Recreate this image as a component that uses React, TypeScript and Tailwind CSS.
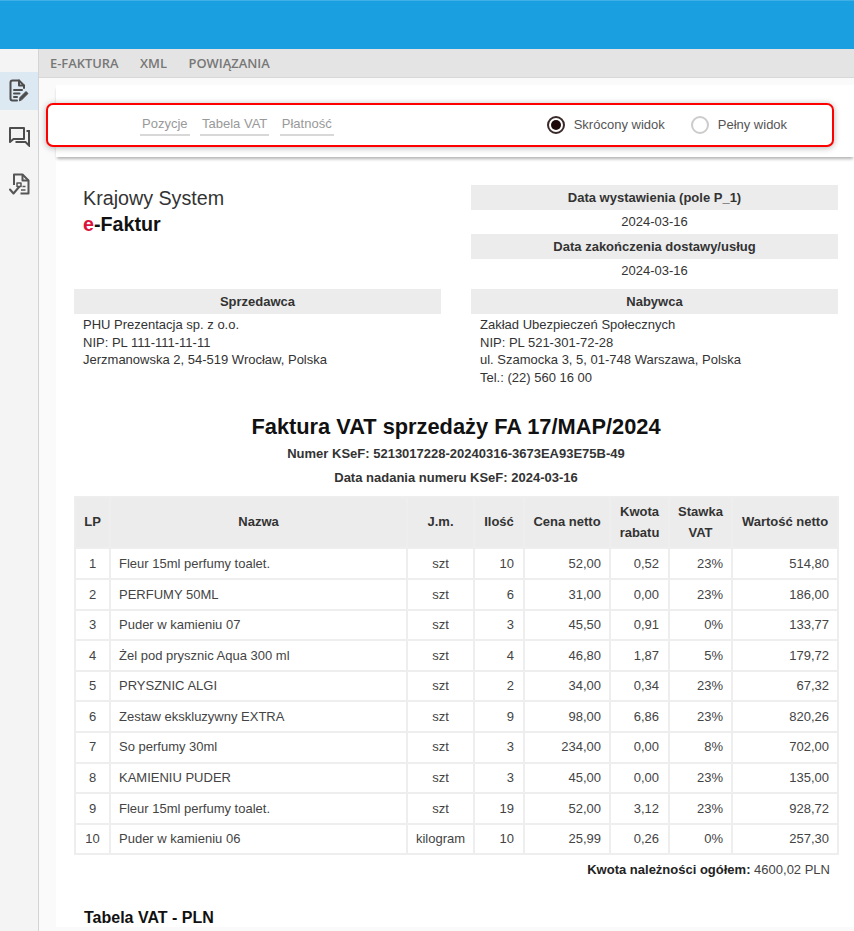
import type { ReactNode } from "react";

const rows = [
  ["1", "Fleur 15ml perfumy toalet.", "szt", "10", "52,00", "0,52", "23%", "514,80"],
  ["2", "PERFUMY 50ML", "szt", "6", "31,00", "0,00", "23%", "186,00"],
  ["3", "Puder w kamieniu 07", "szt", "3", "45,50", "0,91", "0%", "133,77"],
  ["4", "Żel pod prysznic Aqua 300 ml", "szt", "4", "46,80", "1,87", "5%", "179,72"],
  ["5", "PRYSZNIC ALGI", "szt", "2", "34,00", "0,34", "23%", "67,32"],
  ["6", "Zestaw ekskluzywny EXTRA", "szt", "9", "98,00", "6,86", "23%", "820,26"],
  ["7", "So perfumy 30ml", "szt", "3", "234,00", "0,00", "8%", "702,00"],
  ["8", "KAMIENIU PUDER", "szt", "3", "45,00", "0,00", "23%", "135,00"],
  ["9", "Fleur 15ml perfumy toalet.", "szt", "19", "52,00", "3,12", "23%", "928,72"],
  ["10", "Puder w kamieniu 06", "kilogram", "10", "25,99", "0,26", "0%", "257,30"],
];

function GrayBar({ children }: { children: ReactNode }) {
  return <div className="flex h-[25px] items-center justify-center bg-[#ececec] text-[13px] font-bold text-[#333]">{children}</div>;
}

function Th({ children }: { children: ReactNode }) {
  return <th className="border-2 border-[#eeeeee] bg-[#ececec] px-2 pb-[2px] text-center text-[13px] leading-[21px] font-bold text-[#333]">{children}</th>;
}

function SectionTab({ label }: { label: string }) {
  return <span className="border-b-2 border-[#d8d8d8] px-[2px] pb-[2px] text-[13px] leading-[17px] text-[#999]">{label}</span>;
}

function InvoiceEditIcon() {
  return (
    <svg width="20" height="24" viewBox="0 0 20 24" fill="none" stroke="#4d4d4d" strokeWidth="2" strokeLinejoin="round" strokeLinecap="round">
      <path d="M8 21.5H3.5Q1.5 21.5 1.5 19.5V3.5Q1.5 1.5 3.5 1.5H10L15 6.5V9" />
      <path d="M10 1.5V6.5H15" />
      <path d="M5 11H13M5 14.5H10.5M5 18H8" />
      <path d="M10.5 21.5L11 18.5L17 12.5L19 14.5L13 20.5Z" fill="#4d4d4d" strokeWidth="1" />
    </svg>
  );
}

function ChatIcon() {
  return (
    <svg width="21" height="20" viewBox="0 0 21 20" fill="none" stroke="#4d4d4d" strokeWidth="2">
      <path d="M1 1H15V12H4.5L1 15Z" strokeLinejoin="round" />
      <path d="M17.5 4H20V18.5L16.5 15H6.5" />
    </svg>
  );
}

function CheckDocIcon() {
  return (
    <svg width="21" height="23" viewBox="0 0 21 23" fill="none" stroke="#555555" strokeWidth="2" strokeLinejoin="round">
      <path d="M5 12V1.5H13.5L19.5 7.5V20.5H11.5" />
      <path d="M13.5 1.5V7.5H19.5" />
      <path d="M8 10H12V13.5H8ZM13.5 13.5H16.5M12 17H16.5" strokeWidth="1.5" />
      <path d="M1 16.5L4.5 20.5L10 14" strokeLinecap="round" />
    </svg>
  );
}

export default function App() {
  return (
    <div className="flex h-[931px] w-[854px] flex-col overflow-hidden bg-[#fafafa] font-['Liberation_Sans',Arial,sans-serif] text-[#333]">
      <div className="h-[49px] shrink-0 border-t border-[#3fb0e6] bg-[#1a9fe0]" />
      <div className="flex min-h-0 flex-1">
        <aside className="flex w-[39px] shrink-0 flex-col border-r border-[#d4d4d4] bg-[#f4f4f4] pt-[23px]">
          <div className="flex h-[38px] items-center justify-center bg-[#dce9f2]">
            <InvoiceEditIcon />
          </div>
          <div className="flex h-[46px] items-center justify-center pt-[8px]">
            <ChatIcon />
          </div>
          <div className="flex h-[46px] items-center justify-center pt-[10px]">
            <CheckDocIcon />
          </div>
        </aside>
        <div className="flex min-w-0 flex-1 flex-col">
          <nav className="flex h-[29px] shrink-0 items-center gap-[21.5px] border-b border-[#d8d8d8] bg-[#e4e4e4] pt-[2px] pl-[11px] font-['Open_Sans',sans-serif] text-[12.9px] font-semibold text-[#777]">
            <span>E-FAKTURA</span>
            <span>XML</span>
            <span>POWIĄZANIA</span>
          </nav>
          <main className="mt-[7px] ml-[17px] h-[842px] bg-white">
            <div className="relative h-[72px] bg-white shadow-[0_3px_3px_-1px_rgba(0,0,0,0.3)]">
              <div className="absolute top-[18px] left-[-10px] flex h-[44px] w-[788px] items-center rounded-[7px] border-2 border-[#f00] bg-white pl-[92px] shadow-[0_1px_6px_rgba(0,0,0,0.3)]">
                <div className="flex gap-[10.5px]">
                  <SectionTab label="Pozycje" />
                  <SectionTab label="Tabela VAT" />
                  <SectionTab label="Płatność" />
                </div>
                <label className="ml-[213px] flex items-center gap-[9px] text-[13px] text-[#555]">
                  <span className="flex h-[18px] w-[18px] items-center justify-center rounded-full border-2 border-[#3a2a2a]">
                    <span className="h-[10px] w-[10px] rounded-full bg-[#1f0a0a]" />
                  </span>
                  Skrócony widok
                </label>
                <label className="ml-[26px] flex items-center gap-[9px] text-[13px] text-[#555]">
                  <span className="h-[18px] w-[18px] rounded-full border-2 border-[#ccc]" />
                  Pełny widok
                </label>
              </div>
            </div>

            <div className="w-[782px] pl-[18px]">
              <div className="grid grid-cols-[367px_367px] gap-x-[30px] pt-[28px]">
                <div className="pl-[9px]">
                  <p className="text-[19.7px] leading-[26px] text-[#333]">Krajowy System</p>
                  <p className="text-[19.7px] leading-[26px] font-bold text-[#111]">
                    <span className="text-[#dc143c]">e</span>-Faktur
                  </p>
                </div>
                <div>
                  <GrayBar>Data wystawienia (pole P_1)</GrayBar>
                  <p className="h-[24px] text-center text-[13px] leading-[24px]">2024-03-16</p>
                  <GrayBar>Data zakończenia dostawy/usług</GrayBar>
                  <p className="h-[24px] text-center text-[13px] leading-[24px]">2024-03-16</p>
                </div>
              </div>

              <div className="mt-[6px] grid grid-cols-[367px_367px] gap-x-[30px]">
                <div>
                  <GrayBar>Sprzedawca</GrayBar>
                  <div className="pt-[2px] pl-[9px] text-[13px] leading-[17.6px]">
                    <p>PHU Prezentacja sp. z o.o.</p>
                    <p>NIP: PL 111-111-11-11</p>
                    <p>Jerzmanowska 2, 54-519 Wrocław, Polska</p>
                  </div>
                </div>
                <div>
                  <GrayBar>Nabywca</GrayBar>
                  <div className="pt-[2px] pl-[9px] text-[13px] leading-[17.6px]">
                    <p>Zakład Ubezpieczeń Społecznych</p>
                    <p>NIP: PL 521-301-72-28</p>
                    <p>ul. Szamocka 3, 5, 01-748 Warszawa, Polska</p>
                    <p>Tel.: (22) 560 16 00</p>
                  </div>
                </div>
              </div>

              <h1 className="mt-[27px] text-center text-[21.8px] leading-[28px] font-bold text-[#111]">Faktura VAT sprzedaży FA 17/MAP/2024</h1>
              <p className="mt-[4px] text-center text-[13px] leading-[18px] font-bold">Numer KSeF: 5213017228-20240316-3673EA93E75B-49</p>
              <p className="mt-[6px] text-center text-[13px] leading-[18px] font-bold">Data nadania numeru KSeF: 2024-03-16</p>

              <table className="mt-[9px] w-[763px] table-fixed border-collapse">
                <colgroup>
                  <col className="w-[35px]" />
                  <col className="w-[297px]" />
                  <col className="w-[67px]" />
                  <col className="w-[50px]" />
                  <col className="w-[86px]" />
                  <col className="w-[59px]" />
                  <col className="w-[63px]" />
                  <col className="w-[106px]" />
                </colgroup>
                <thead>
                  <tr className="h-[51px]">
                    <Th>LP</Th>
                    <Th>Nazwa</Th>
                    <Th>J.m.</Th>
                    <Th>Ilość</Th>
                    <Th>Cena netto</Th>
                    <Th>Kwota rabatu</Th>
                    <Th>Stawka VAT</Th>
                    <Th>Wartość netto</Th>
                  </tr>
                </thead>
                <tbody className="text-[13px] text-[#444]">
                  {rows.map((row) => (
                    <tr key={row[0]} className="h-[30.6px]">
                      <td className="border-2 border-[#eeeeee] text-center">{row[0]}</td>
                      <td className="border-2 border-[#eeeeee] pl-[8px]">{row[1]}</td>
                      <td className="border-2 border-[#eeeeee] text-center">{row[2]}</td>
                      <td className="border-2 border-[#eeeeee] pr-[9px] text-right">{row[3]}</td>
                      <td className="border-2 border-[#eeeeee] pr-[8px] text-right">{row[4]}</td>
                      <td className="border-2 border-[#eeeeee] pr-[9px] text-right">{row[5]}</td>
                      <td className="border-2 border-[#eeeeee] pr-[8px] text-right">{row[6]}</td>
                      <td className="border-2 border-[#eeeeee] pr-[8px] text-right">{row[7]}</td>
                    </tr>
                  ))}
                </tbody>
              </table>

              <p className="mt-[6px] pr-[8px] text-right text-[13px] leading-[18px] text-[#444]">
                <span className="font-bold text-[#222]">Kwota należności ogółem:</span> 4600,02 PLN
              </p>
              <h2 className="mt-[29px] pl-[10px] text-[16px] leading-[20px] font-bold text-[#111]">Tabela VAT - PLN</h2>
            </div>
          </main>
        </div>
      </div>
    </div>
  );
}
